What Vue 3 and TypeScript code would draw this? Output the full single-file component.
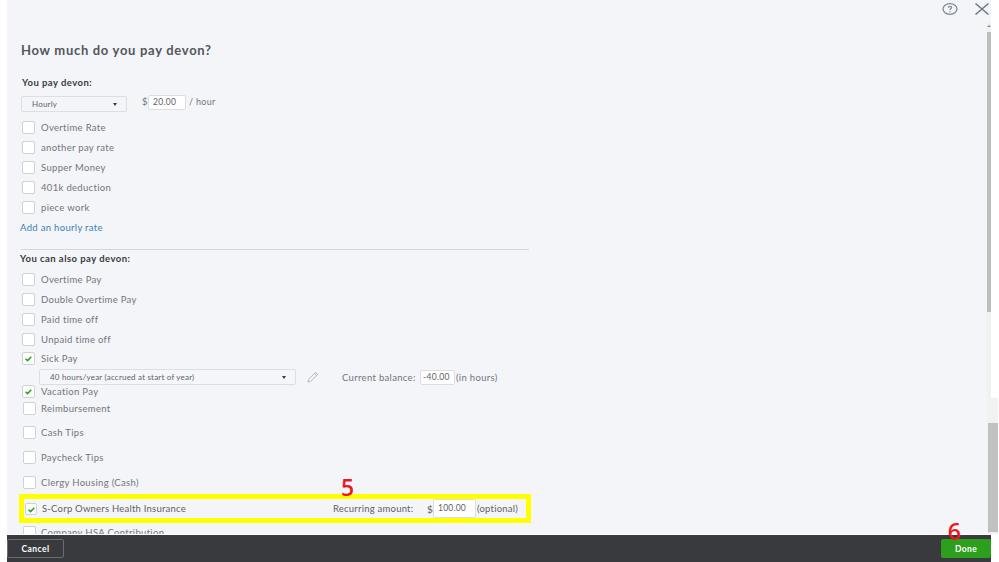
<script setup lang="ts">
const rates: string[] = ['Overtime Rate', 'another pay rate', 'Supper Money', '401k deduction', 'piece work']
const basics: string[] = ['Overtime Pay', 'Double Overtime Pay', 'Paid time off', 'Unpaid time off']
const tips: string[] = ['Cash Tips', 'Paycheck Tips', 'Clergy Housing (Cash)']
</script>

<template>
  <div class="page">
    <div class="panel">
      <div class="topbar">
        <svg class="help" viewBox="0 0 16 12" fill="none" stroke="#7b8590" stroke-width="1.2">
          <ellipse cx="8" cy="6" rx="7" ry="5.3" />
          <path d="M6.4 4.8c0-1 .7-1.5 1.6-1.5s1.6.5 1.6 1.3c0 1.2-1.6 1.2-1.6 2.4" />
          <path d="M8 8.2v1" />
        </svg>
        <svg class="close" viewBox="0 0 14 12" fill="none" stroke="#6f7a86" stroke-width="1.5">
          <path d="M.5.5l13 11M13.5.5l-13 11" />
        </svg>
      </div>

      <div class="middle">
        <div class="content">
          <h1 class="title">How much do you pay devon?</h1>
          <h2 class="label first">You pay devon:</h2>

          <div class="pay-line">
            <div class="select hourly"><span>Hourly</span><i class="caret"></i></div>
            <span class="dollar">$</span>
            <div class="input rate">20.00</div>
            <span class="unit">/ hour</span>
          </div>

          <div class="list">
            <div v-for="r in rates" :key="r" class="row">
              <span class="box"></span><span>{{ r }}</span>
            </div>
            <a class="row link">Add an hourly rate</a>
          </div>

          <div class="rule"></div>
          <h2 class="label second">You can also pay devon:</h2>

          <div v-for="b in basics" :key="b" class="row">
            <span class="box"></span><span>{{ b }}</span>
          </div>

          <div class="row sick">
            <span class="box">
              <svg viewBox="0 0 13 13" fill="none" stroke="#2ca01c" stroke-width="1.8"><path d="M3 6.8l2.4 2.2 4.4-4.6" /></svg>
            </span>
            <span>Sick Pay</span>
          </div>

          <div class="accrual">
            <div class="select policy"><span>40 hours/year (accrued at start of year)</span><i class="caret"></i></div>
            <svg class="pencil" viewBox="0 0 12 12" fill="none" stroke="#b4b8bd" stroke-width="1">
              <path d="M1 11l.7-2.8L8.6 1.3l2.1 2.1-6.9 6.9zM7.6 2.3l2.1 2.1" />
            </svg>
            <span class="balance">Current balance:</span>
            <div class="input hours">-40.00</div>
            <span class="in-hours">(in hours)</span>
          </div>

          <div class="row vacation">
            <span class="box">
              <svg viewBox="0 0 13 13" fill="none" stroke="#2ca01c" stroke-width="1.8"><path d="M3 6.8l2.4 2.2 4.4-4.6" /></svg>
            </span>
            <span>Vacation Pay</span>
          </div>

          <div class="row reimb"><span class="box"></span><span>Reimbursement</span></div>

          <div class="tips">
            <div v-for="t in tips" :key="t" class="row tall">
              <span class="box"></span><span>{{ t }}</span>
            </div>
          </div>

          <div class="highlight">
            <span class="box">
              <svg viewBox="0 0 13 13" fill="none" stroke="#2ca01c" stroke-width="1.8"><path d="M3 6.8l2.4 2.2 4.4-4.6" /></svg>
            </span>
            <span class="corp">S-Corp Owners Health Insurance</span>
            <span class="recurring">Recurring amount:</span>
            <span class="dollar2">$</span>
            <div class="input amount">100.00</div>
            <span class="optional">(optional)</span>
            <span class="step five">5</span>
          </div>

          <div class="row company"><span class="box"></span><span>Company HSA Contribution</span></div>
        </div>

        <div class="inner-bar"><i class="inner-arrow"></i><div class="inner-thumb"></div></div>
      </div>

      <div class="divider"></div>

      <div class="footer">
        <button class="btn cancel">Cancel</button>
        <button class="btn done">Done</button>
        <span class="step six">6</span>
      </div>
    </div>

    <div class="outer-bar"><div class="outer-thumb"></div></div>
  </div>
</template>

<style>
html, body { margin: 0; background: #fff; }
</style>

<style scoped>
.page {
  position: relative;
  width: 999px;
  height: 562px;
  overflow: hidden;
  background: #fff;
  font-family: Lato, "Open Sans", sans-serif;
  font-size: 9.5px;
  letter-spacing: 0.32px;
  color: #737479;
}
.panel {
  display: flex;
  flex-direction: column;
  width: 984px;
  height: 562px;
  margin-left: 7px;
  background: #f3f5f9;
}
.topbar {
  display: flex;
  justify-content: flex-end;
  align-items: flex-start;
  gap: 17px;
  height: 22px;
  padding: 3px 2px 0 0;
  box-sizing: border-box;
}
.help { width: 16px; height: 12px; }
.close { width: 14px; height: 12px; }
.middle {
  display: flex;
  height: 512px;
  overflow: hidden;
}
.content {
  flex: 1;
  padding-left: 14px;
  overflow: hidden;
}
.title {
  margin: 20px 0 0;
  font-size: 13px;
  line-height: 16px;
  font-weight: 700;
  letter-spacing: 0.7px;
  color: #55565b;
}
.label {
  margin: 0;
  font-size: 9.5px;
  font-weight: 700;
  letter-spacing: 0.45px;
  color: #393a3d;
  line-height: 12px;
}
.label.first { margin: 19px 0 0 1px; }
.label.second { margin: 3px 0 0 -1px; height: 16px; }
.pay-line {
  display: flex;
  align-items: flex-start;
  height: 21px;
  margin-top: 7px;
}
.select {
  display: flex;
  align-items: center;
  justify-content: space-between;
  height: 16px;
  box-sizing: border-box;
  border: 1px solid #dcdee2;
  border-radius: 2px;
  background: #f3f5f9;
  font-size: 8px;
  letter-spacing: 0.2px;
  color: #606166;
}
.hourly { width: 106px; margin-right: 15px; padding: 0 9px 0 10px; }
.policy { width: 257px; padding: 0 9px 0 10px; background: #f4f6f9; }
.caret {
  width: 0;
  height: 0;
  border-left: 2.5px solid transparent;
  border-right: 2.5px solid transparent;
  border-top: 3px solid #393a3d;
}
.input {
  box-sizing: border-box;
  height: 15px;
  border: 1px solid #dcdee2;
  border-radius: 2px;
  background: #fff;
  font-size: 8.5px;
  line-height: 13px;
  color: #606166;
}
.dollar { width: 6px; margin-top: -1px; line-height: 13px; }
.rate { width: 38px; margin-top: -1px; padding-left: 4px; margin-right: 3px; }
.unit { margin-top: -1px; line-height: 13px; font-size: 9px; }
.row {
  display: flex;
  align-items: center;
  gap: 6px;
  height: 20px;
}
.box {
  flex: none;
  display: block;
  width: 13px;
  height: 13px;
  margin-left: 1px;
  box-sizing: border-box;
  border: 1px solid #cfd1d5;
  border-radius: 2px;
  background: #fff;
}
.box svg { display: block; width: 11px; height: 11px; }
.link { margin-left: -1px; color: #3c80b6; }
.rule { height: 1px; margin-top: 12px; width: 508px; background: #d4d6da; }
.sick { height: 19px; }
.accrual {
  display: flex;
  align-items: center;
  height: 16px;
  margin-top: 1px;
  padding-left: 18px;
}
.pencil { width: 12px; height: 12px; margin: 0 23px 0 11px; flex: none; }
.balance { width: 78px; }
.hours { width: 35px; padding-left: 2px; }
.in-hours { margin-left: 1px; }
.vacation { height: 13px; }
.reimb { height: 20px; }
.reimb .box, .tall .box, .company .box { margin-left: 2px; }
.reimb, .tall, .company { gap: 5px; }
.tips { margin-top: 2px; }
.tall { height: 25px; }
.highlight {
  position: relative;
  display: flex;
  align-items: center;
  box-sizing: border-box;
  width: 512px;
  height: 29px;
  margin: -1px 0 0 -2px;
  border: 5px solid #ffff00;
  letter-spacing: 0.22px;
  color: #606166;
}
.highlight .box { width: 12px; height: 12px; margin-left: 1px; }
.corp { width: 291px; margin-left: 5px; }
.recurring { width: 94px; }
.dollar2 { width: 6px; font-size: 10px; }
.amount {
  width: 43px;
  height: 19px;
  padding-left: 4px;
  line-height: 17px;
}
.optional { margin-left: 1px; }
.step {
  position: absolute;
  font-family: "Open Sans", sans-serif;
  font-size: 23px;
  line-height: 16px;
  font-weight: 600;
  letter-spacing: 0;
  color: #ee1620;
}
.five { left: 317px; top: -20px; }
.company {
  height: 14px;
  margin-top: 3px;
  align-items: flex-start;
  line-height: 13px;
}
.inner-bar {
  flex: none;
  position: relative;
  width: 4px;
  background: #f1f1f1;
}
.inner-arrow {
  position: absolute;
  left: 0;
  top: 3px;
  border-left: 2px solid transparent;
  border-right: 2px solid transparent;
  border-bottom: 2px solid #8a8a8a;
}
.inner-thumb {
  margin-top: 10px;
  height: 280px;
  background: #bcbcbc;
}
.divider { height: 1px; background: #fff; }
.footer {
  position: relative;
  display: flex;
  align-items: center;
  justify-content: space-between;
  flex: 1;
  background: #393a3d;
}
.btn {
  height: 19px;
  padding: 0;
  border-radius: 2px;
  font-family: inherit;
  font-size: 8.5px;
  font-weight: 700;
  letter-spacing: 0.4px;
  color: #fff;
}
.cancel {
  width: 57px;
  background: #393a3d;
  border: 1px solid #6b6c72;
}
.done {
  width: 50px;
  background: #2ca01c;
  border: none;
}
.six { right: 30px; top: -12px; }
.outer-bar {
  position: absolute;
  right: 1px;
  top: 398px;
  width: 11px;
  height: 136px;
  padding-top: 25px;
  box-sizing: border-box;
  background: #f1f1f1;
}
.outer-thumb {
  width: 10px;
  height: 109px;
  margin-left: 1px;
  background: #c1c1c1;
}
</style>
